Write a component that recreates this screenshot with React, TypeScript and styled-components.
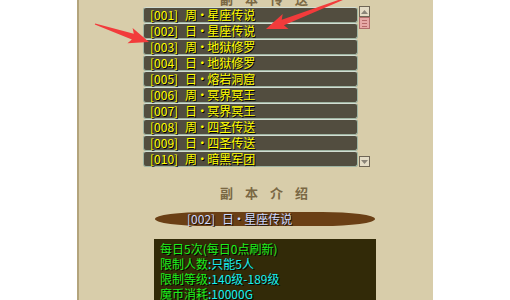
import React from 'react';
import styled, { createGlobalStyle } from 'styled-components';

const GlobalStyle = createGlobalStyle`
  html, body {
    margin: 0;
    padding: 0;
    background: #ffffff;
  }
  body {
    font-family: "Noto Sans CJK SC", "DejaVu Sans", sans-serif;
  }
`;

const Page = styled.div`
  position: relative;
  width: 510px;
  height: 300px;
  overflow: hidden;
  display: flex;
  padding-left: 77px;
  box-sizing: border-box;
`;

const Panel = styled.div`
  width: 356px;
  height: 300px;
  box-sizing: border-box;
  background: #d8cdaa;
  border-left: 2px solid #b3a47c;
  display: flex;
  flex-direction: column;
  align-items: flex-start;
  padding-left: 64px;
`;

const Title = styled.div<{ $top: number }>`
  margin-top: ${(p) => p.$top}px;
  margin-left: 77px;
  height: 16px;
  line-height: 16px;
  font-size: 13px;
  font-weight: bold;
  letter-spacing: 12px;
  color: #7a6844;
  white-space: nowrap;
`;

const ListArea = styled.div`
  display: flex;
  gap: 1px;
`;

const List = styled.div`
  width: 215px;
  display: flex;
  flex-direction: column;
`;

const Row = styled.div`
  height: 16px;
  box-sizing: border-box;
  background: #524d3f;
  border: 1px solid #9fb4a2;
  border-top-color: #d2ddd2;
  border-radius: 3px;
  padding-left: 6px;
  display: flex;
  align-items: center;
  font-size: 12px;
  line-height: 14px;
  color: #ffff00;
  text-shadow: 1px 1px 0 #000;
  white-space: nowrap;
`;

const Code = styled.span`
  margin-right: 7px;
`;

const Dot = styled.span`
  margin: 0 -1px;
`;

const ScrollBar = styled.div`
  width: 11px;
  display: flex;
  flex-direction: column;
  justify-content: space-between;
  margin-top: -1px;
`;

const ScrollTop = styled.div`
  display: flex;
  flex-direction: column;
`;

const ArrowBtn = styled.div`
  width: 11px;
  height: 11px;
  box-sizing: border-box;
  background: #e4dcc6;
  border: 1px solid #6f6656;
  display: flex;
  align-items: center;
  justify-content: center;
`;

const Thumb = styled.div`
  width: 11px;
  height: 12px;
  box-sizing: border-box;
  background: #e6a9a6;
  border: 1px solid #b06c6a;
  display: flex;
  flex-direction: column;
  justify-content: center;
  align-items: center;
  gap: 2px;
`;

const ThumbLine = styled.div`
  width: 5px;
  height: 1px;
  background: #b56a68;
`;

const Pill = styled.div`
  margin-top: 11px;
  margin-left: 12px;
  width: 220px;
  height: 15px;
  border-radius: 60px / 8px;
  background: #6a3f15;
  padding-left: 32px;
  box-sizing: border-box;
  display: flex;
  align-items: center;
  font-size: 12px;
  line-height: 14px;
  color: #cbd8ff;
  text-shadow: 1px 1px 0 #1b1005;
  white-space: nowrap;
`;

const InfoBox = styled.div`
  margin-top: 13px;
  margin-left: 11px;
  width: 222px;
  flex: 1;
  background: #322a08;
  padding: 2px 0 0 6px;
  box-sizing: border-box;
  display: flex;
  flex-direction: column;
`;

const InfoLine = styled.div`
  height: 15px;
  line-height: 15px;
  font-size: 12px;
  white-space: nowrap;
  text-shadow: 1px 1px 0 #000;
  color: #1cf01c;
`;

const Value = styled.span`
  color: #12f0f0;
`;

const Overlay = styled.svg`
  position: absolute;
  left: 0;
  top: 0;
  pointer-events: none;
`;

type Pt = [number, number];

function arrowPoints(tail: Pt, tip: Pt, headLen: number, headHalf: number, shaftHalf: number) {
  const dx = tip[0] - tail[0];
  const dy = tip[1] - tail[1];
  const len = Math.hypot(dx, dy);
  const ux = dx / len;
  const uy = dy / len;
  const nx = -uy;
  const ny = ux;
  const bx = tip[0] - ux * headLen;
  const by = tip[1] - uy * headLen;
  const pts: Pt[] = [
    [tail[0] + nx * 0.6, tail[1] + ny * 0.6],
    [bx + nx * shaftHalf, by + ny * shaftHalf],
    [bx - ux * 3 + nx * headHalf, by - uy * 3 + ny * headHalf],
    tip,
    [bx - ux * 3 - nx * headHalf, by - uy * 3 - ny * headHalf],
    [bx - nx * shaftHalf, by - ny * shaftHalf],
    [tail[0] - nx * 0.6, tail[1] - ny * 0.6],
  ];
  return pts.map((p) => `${p[0].toFixed(1)},${p[1].toFixed(1)}`).join(' ');
}

const dungeons = [
  ['001', '周', '星座传说'],
  ['002', '日', '星座传说'],
  ['003', '周', '地狱修罗'],
  ['004', '日', '地狱修罗'],
  ['005', '日', '熔岩洞窟'],
  ['006', '周', '冥界冥王'],
  ['007', '日', '冥界冥王'],
  ['008', '周', '四圣传送'],
  ['009', '日', '四圣传送'],
  ['010', '周', '暗黑军团'],
];

const App = () => {
  return (
    <>
      <GlobalStyle />
      <Page>
        <Panel>
          <Title $top={-9}>副本传送</Title>
          <ListArea>
            <List>
              {dungeons.map(([code, kind, name]) => (
                <Row key={code}>
                  <Code>[{code}]</Code>
                  {kind}
                  <Dot>・</Dot>
                  {name}
                </Row>
              ))}
            </List>
            <ScrollBar>
              <ScrollTop>
                <ArrowBtn>
                  <svg width="7" height="4" viewBox="0 0 7 4">
                    <polygon points="0,4 3.5,0 7,4" fill="#8a8478" />
                  </svg>
                </ArrowBtn>
                <Thumb>
                  <ThumbLine />
                  <ThumbLine />
                  <ThumbLine />
                </Thumb>
              </ScrollTop>
              <ArrowBtn>
                <svg width="7" height="4" viewBox="0 0 7 4">
                  <polygon points="0,0 3.5,4 7,0" fill="#8a8478" />
                </svg>
              </ArrowBtn>
            </ScrollBar>
          </ListArea>
          <Title $top={18}>副本介绍</Title>
          <Pill>
            <Code>[002]</Code>日<Dot>・</Dot>星座传说
          </Pill>
          <InfoBox>
            <InfoLine>每日5次(每日0点刷新)</InfoLine>
            <InfoLine>
              限制人数<Value>:只能5人</Value>
            </InfoLine>
            <InfoLine>
              限制等级<Value>:140级-189级</Value>
            </InfoLine>
            <InfoLine>
              魔币消耗<Value>:10000G</Value>
            </InfoLine>
          </InfoBox>
        </Panel>
        <Overlay width={510} height={300} viewBox="0 0 510 300">
          <polygon points={arrowPoints([346, -2], [266, 29], 18, 8, 3)} fill="#f23b3b" />
          <polygon points={arrowPoints([95, 24], [149, 42], 17, 8, 3)} fill="#f23b3b" />
        </Overlay>
      </Page>
    </>
  );
};

export default App;
